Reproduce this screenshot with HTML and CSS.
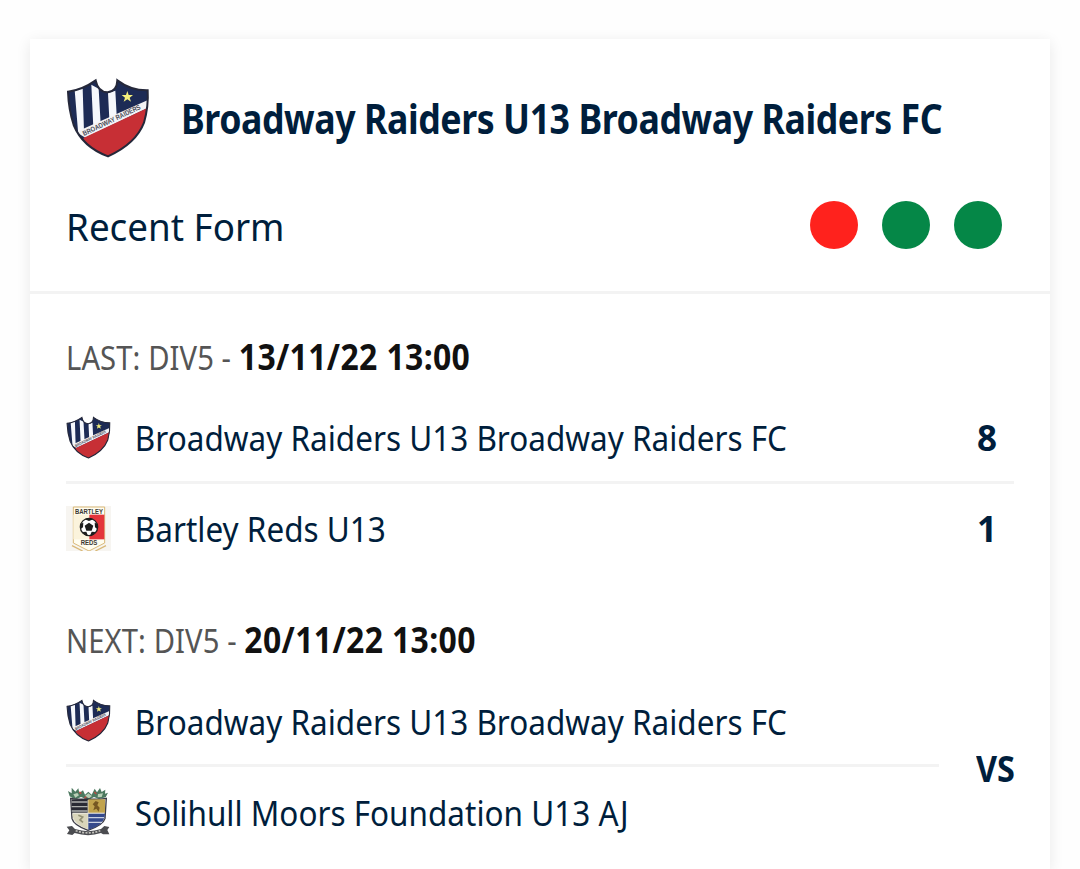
FILE: index.html
```html
<!doctype html>
<html lang="en">
  <head>
    <meta charset="utf-8">
    <meta name="viewport" content="width=device-width, initial-scale=1.0">
    <title>Broadway Raiders U13</title>
    <link rel="stylesheet" href="styles.css">
  </head>
  <body>
    <div class="card">
      <div class="card-header">
        <div class="team-title">
          <!-- club badge, reused in the match lists -->
          <svg class="crest" viewBox="30 24 252 252">
            <clipPath id="shield"><path d="M36 71 Q78 66 119 37 Q126 72 155 73 Q183 70 184 37 Q225 68 275 67 Q278 115 264 164 Q240 227 156 265 Q80 237 53 171 Q38 125 36 71Z"/></clipPath>
            <g id="raiders">
              <g clip-path="url(#shield)">
                <rect x="30" y="24" width="252" height="252" fill="#1d2b55"/>
                <path d="M56 66 80 60 84 190 66 190Z M106 50 128 62 134 168 112 180Z M156 76 178 68 182 142 160 154Z" fill="#f6f8fc"/>
                <path d="M60 192 276 96 276 119 88 209Z" fill="#f3f3f5"/>
                <path d="M82 210 276 119 276 276 100 276Z" fill="#c72f35"/>
                <path d="M214 69 218 81 231 81 221 89 225 101 214 94 203 101 207 89 197 81 210 81Z" fill="#f5f07c"/>
              </g>
              <path d="M36 71 Q78 66 119 37 Q126 72 155 73 Q183 70 184 37 Q225 68 275 67 Q278 115 264 164 Q240 227 156 265 Q80 237 53 171 Q38 125 36 71Z" fill="none" stroke="#25283a" stroke-width="6"/>
              <text class="badge-text" x="84" y="204" font-size="21" textLength="190" lengthAdjust="spacingAndGlyphs" transform="rotate(-25.5 84 204)" fill="#4b4c58">BROADWAY RAIDERS</text>
            </g>
          </svg>
          <h1>Broadway Raiders U13 Broadway Raiders FC</h1>
        </div>
        <div class="form">
          <span class="form-label">Recent Form</span>
          <div class="form-results">
            <span class="dot lost"></span>
            <span class="dot won"></span>
            <span class="dot won"></span>
          </div>
        </div>
      </div>

      <div class="match">
        <p class="match-date"><span>LAST: DIV5 - </span><b>13/11/22 13:00</b></p>
        <div class="team">
          <svg class="logo" viewBox="30 24 252 252"><use href="#raiders"/></svg>
          <span class="name">Broadway Raiders U13 Broadway Raiders FC</span>
          <b class="score">8</b>
        </div>
        <div class="team">
          <svg class="logo" viewBox="18 13 135 135">
            <rect x="18" y="13" width="135" height="135" fill="#f7f5f1"/>
            <path d="M40 16H134V124L87 148 40 124Z" fill="#fffdf0" stroke="#d9b878" stroke-width="3"/>
            <path d="M40 39H88V113H40Z" fill="#fbf3dc"/>
            <path d="M88 39H133V113H88Z" fill="#e4353b"/>
            <path d="M36 132 68 148M138 132 106 148" stroke="#d9b878" stroke-width="4"/>
            <circle cx="87" cy="76" r="26" fill="#fff" stroke="#222" stroke-width="4"/>
            <path d="M87 63 100 72 95 87H79L74 72Z M74 53 87 58 100 53 92 49H82Z M61 67 70 63 69 77 61 83Z M113 67 104 63 105 77 113 83Z M68 91 79 90 84 102 73 99Z M106 91 95 90 90 102 101 99Z" fill="#1d1d1d"/>
            <text class="badge-text" x="45" y="36" font-size="21" textLength="84" lengthAdjust="spacingAndGlyphs" fill="#3c3834">BARTLEY</text>
            <text class="badge-text" x="62" y="131" font-size="21" textLength="50" lengthAdjust="spacingAndGlyphs" fill="#3c3834">REDS</text>
          </svg>
          <span class="name">Bartley Reds U13</span>
          <b class="score">1</b>
        </div>
      </div>

      <div class="match next">
        <p class="match-date"><span>NEXT: DIV5 - </span><b>20/11/22 13:00</b></p>
        <div class="fixture">
          <div class="teams">
            <div class="team">
              <svg class="logo" viewBox="30 24 252 252"><use href="#raiders"/></svg>
              <span class="name">Broadway Raiders U13 Broadway Raiders FC</span>
            </div>
            <div class="team">
              <svg class="logo tall" viewBox="21 18 135 159">
                <path d="M32 52 27 36 38 43 38 26 49 38 58 28 61 42 72 34 78 47 88 38 98 47 107 29 114 40 123 27 128 39 139 32 138 44 147 41 140 55 120 60 105 54 88 63 66 54 49 62Z" fill="#4d7960"/>
                <path d="M43 46 55 42 60 49 49 56Z M78 51 88 43 99 51 90 58Z M117 45 132 43 128 54 116 55Z" fill="#b9cfb6"/>
                <path d="M61 39 67 44M106 39 112 45M76 58 82 53" stroke="#b54f45" stroke-width="5"/>
                <path d="M35 58Q60 62 87 60 115 62 142 58L138 119Q132 139 87 154 44 139 39 119Z" fill="#eceae2" stroke="#3c3c46" stroke-width="4"/>
                <path d="M38 61H86V101H38Z" fill="#292a34"/>
                <path d="M38 69H86M38 83H86M38 96H86" stroke="#aeb0ae" stroke-width="4"/>
                <path d="M88 61H138V101H88Z" fill="#c1a34d"/>
                <path d="M103 94 107 82 101 76 110 66 119 70 115 79 122 86 119 98 112 89Z" fill="#765722"/>
                <path d="M40 104H86V150Q43 135 40 104Z" fill="#d9d5ba"/>
                <path d="M58 109 71 114 63 123 72 130" fill="none" stroke="#939174" stroke-width="5"/>
                <path d="M88 104H138Q138 138 88 152Z" fill="#35498b"/>
                <path d="M88 116H135M88 130H129" stroke="#cbd1e2" stroke-width="4"/>
                <path d="M23 143 39 141 48 150Q88 163 126 150L136 141 151 144 145 153 151 166 132 166 126 162Q88 175 47 162L40 168 24 165 31 154Z" fill="#4b4c50"/>
                <path d="M50 155Q88 168 124 155" fill="none" stroke="#c3c2bb" stroke-width="5" stroke-dasharray="6 4"/>
              </svg>
              <span class="name">Solihull Moors Foundation U13 AJ</span>
            </div>
          </div>
          <b class="versus">VS</b>
        </div>
      </div>
    </div>
  </body>
</html>
```

FILE: styles.css
```css
body {
  margin: 0;
  height: 869px;
  overflow: hidden;
  background: #fefefe;
  color: #001e3c;
  font-family: "Noto Sans", sans-serif;
}

.card {
  height: 830px;
  margin: 39px 30px 0;
  background: #fff;
  box-shadow: 0 3px 14px rgba(0, 0, 0, 0.09);
}

.card-header {
  height: 255px;
  box-sizing: border-box;
  padding: 36px 36px 0;
  border-bottom: 3px solid #f3f3f3;
}

.team-title {
  display: flex;
  align-items: center;
  height: 86px;
}

.crest {
  flex: none;
  width: 84px;
  height: 84px;
  margin-right: 31px;
}

/* narrow the type a little */
h1,
.form-label,
.match-date,
.name,
.versus {
  transform: scaleX(0.926);
  transform-origin: left;
}

h1 {
  margin: 0;
  font-size: 41px;
  letter-spacing: -0.5px;
  white-space: nowrap;
  transform: scaleX(0.871);
}

.form {
  display: flex;
  align-items: center;
  justify-content: space-between;
  height: 56px;
  margin-top: 37px;
  padding-right: 12px;
}

.form-label {
  margin-top: -2px;
  font-size: 39px;
  transform: scaleX(0.943);
}

.form-results {
  display: flex;
  gap: 24px;
}

.dot {
  width: 48px;
  height: 48px;
  margin-top: -2px;
  border-radius: 50%;
}

.lost {
  background: #ff221d;
}

.won {
  background: #058747;
}

.match {
  padding: 33px 36px 0;
}

.match-date {
  margin: 0;
  height: 66px;
  line-height: 60px;
  font-size: 32px;
  color: #555;
  white-space: pre;
  transform: scaleX(0.912);
}

.match-date span {
  letter-spacing: 0.1px;
}

.match-date b {
  font-size: 35px;
  letter-spacing: 0.4px;
  color: #111;
}

.team {
  display: flex;
  align-items: center;
  height: 88px;
}

.team + .team {
  border-top: 3px solid #f3f3f3;
}

.logo {
  flex: none;
  width: 45px;
  height: 45px;
}

.tall {
  height: 53px;
}

.name {
  margin-left: 22px;
  padding: 1px 0 0 2px;
  font-size: 34px;
  white-space: nowrap;
}

.score {
  margin-left: auto;
  margin-right: 17px;
  font-size: 35px;
}

.next {
  padding-top: 38px;
}

.next .name {
  padding-top: 3px;
}

.fixture {
  display: flex;
  align-items: center;
}

.teams {
  flex: none;
  width: 873px;
}

.versus {
  margin-left: 37px;
  padding-top: 6px;
  font-size: 35px;
}

.badge-text {
  font-family: "Liberation Sans", sans-serif;
  font-weight: bold;
}
```
